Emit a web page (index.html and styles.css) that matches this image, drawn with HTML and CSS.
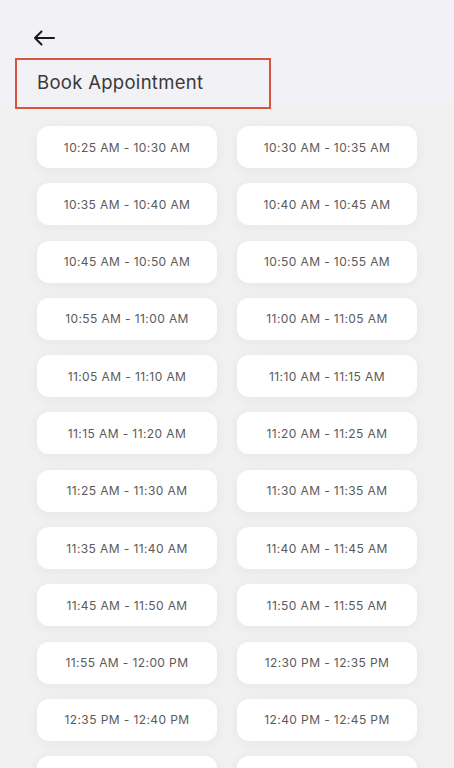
FILE: index.html
```html
<!DOCTYPE html>
<html>
<head>
<meta charset="utf-8">
<link rel="stylesheet" href="styles.css">
</head>
<body>
<div class="page">
  <header class="header">
    <div class="back" aria-label="Back">
      <svg width="24" height="16" viewBox="0 0 24 16"><path d="M22 8H3M9.5 1.5L3 8l6.5 6.5" fill="none" stroke="#1a1a1a" stroke-width="2" stroke-linecap="round" stroke-linejoin="round"/></svg>
    </div>
    <div class="title-box"><h1 class="title">Book Appointment</h1></div>
  </header>
  <main class="slots">
    <div class="slot">10:25 AM - 10:30 AM</div>
    <div class="slot">10:30 AM - 10:35 AM</div>
    <div class="slot">10:35 AM - 10:40 AM</div>
    <div class="slot">10:40 AM - 10:45 AM</div>
    <div class="slot">10:45 AM - 10:50 AM</div>
    <div class="slot">10:50 AM - 10:55 AM</div>
    <div class="slot">10:55 AM - 11:00 AM</div>
    <div class="slot">11:00 AM - 11:05 AM</div>
    <div class="slot">11:05 AM - 11:10 AM</div>
    <div class="slot">11:10 AM - 11:15 AM</div>
    <div class="slot">11:15 AM - 11:20 AM</div>
    <div class="slot">11:20 AM - 11:25 AM</div>
    <div class="slot">11:25 AM - 11:30 AM</div>
    <div class="slot">11:30 AM - 11:35 AM</div>
    <div class="slot">11:35 AM - 11:40 AM</div>
    <div class="slot">11:40 AM - 11:45 AM</div>
    <div class="slot">11:45 AM - 11:50 AM</div>
    <div class="slot">11:50 AM - 11:55 AM</div>
    <div class="slot">11:55 AM - 12:00 PM</div>
    <div class="slot">12:30 PM - 12:35 PM</div>
    <div class="slot">12:35 PM - 12:40 PM</div>
    <div class="slot">12:40 PM - 12:45 PM</div>
    <div class="slot"></div>
    <div class="slot"></div>
  </main>
</div>
</body>
</html>
```
FILE: styles.css
```css
* { box-sizing: border-box; }
html, body { margin: 0; padding: 0; }
body {
  width: 454px;
  height: 768px;
  overflow: hidden;
  background: #f1f1f1;
  font-family: Inter, "Open Sans", sans-serif;
}
.page { display: flex; flex-direction: column; }
.header {
  background: #f2f1f6;
  height: 104px;
  padding: 26px 0 0 15px;
  display: flex;
  flex-direction: column;
  align-items: flex-start;
}
.back {
  margin: 0 0 8px 17px;
  width: 24px;
  height: 24px;
  display: flex;
  align-items: center;
  justify-content: center;
  flex: none;
}
.title-box {
  width: 256px;
  height: 51px;
  flex: none;
  border: 2px solid #d5553f;
  padding: 0 0 4px 20px;
  display: flex;
  align-items: center;
  position: relative;
  z-index: 1;
}
.title {
  margin: 0;
  font-size: 18.5px;
  font-weight: 400;
  color: #3a3a3a;
  letter-spacing: 0.3px;
}
.slots {
  display: grid;
  grid-template-columns: 180px 180px;
  column-gap: 20px;
  row-gap: 15.3px;
  padding: 22px 0 0 37px;
}
.slot {
  height: 42px;
  background: #fff;
  border-radius: 12px;
  box-shadow: 0 2px 14px rgba(0,0,0,0.05);
  display: flex;
  align-items: center;
  justify-content: center;
  font-size: 12px;
  color: #5a5a5a;
  letter-spacing: 0.4px;
}
```
